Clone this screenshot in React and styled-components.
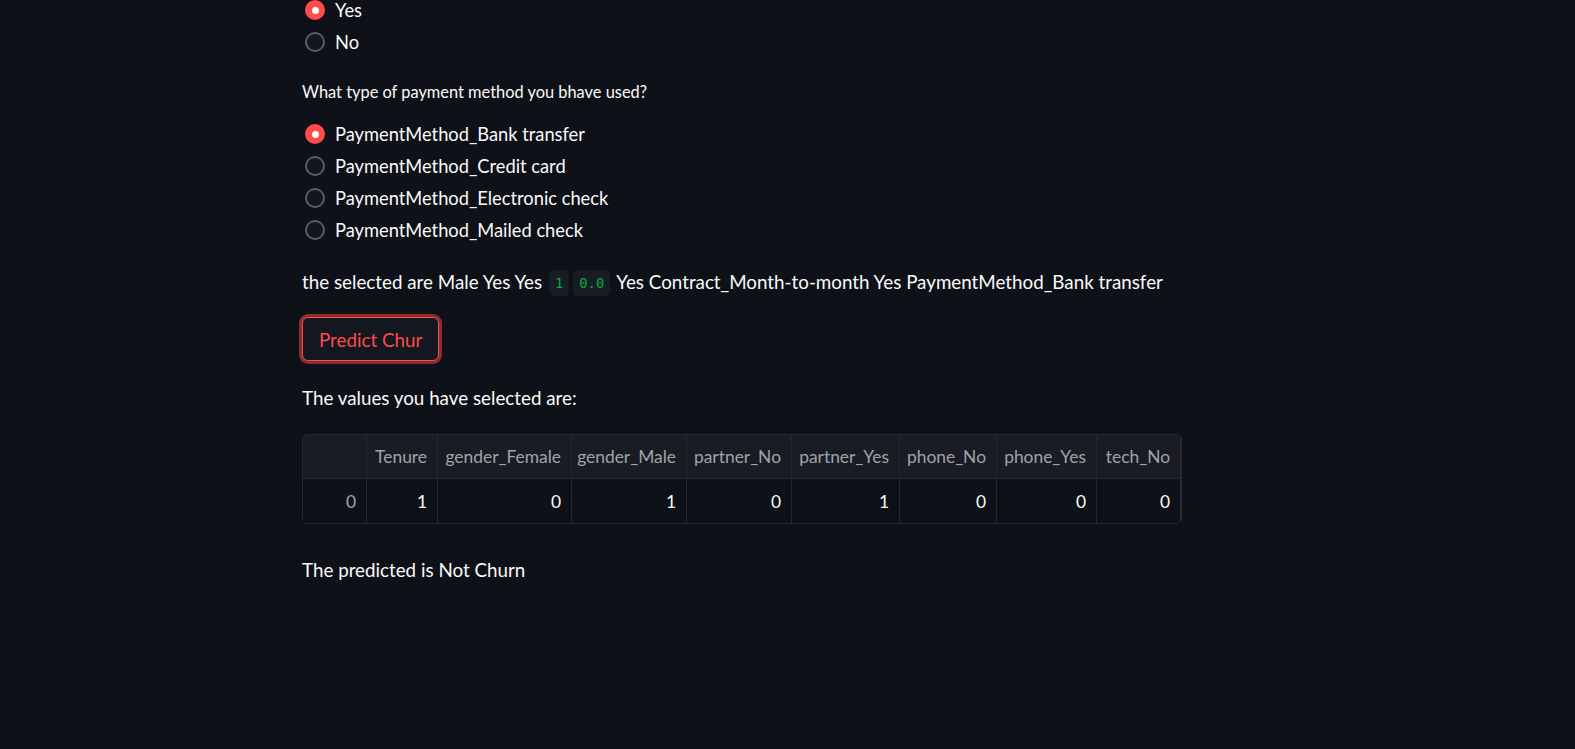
import styled, { createGlobalStyle } from "styled-components";

const GlobalStyle = createGlobalStyle`
  html, body {
    margin: 0;
    background: #0e1117;
    color: #fafafa;
    font-family: "Lato", "Noto Sans", sans-serif;
    overflow: hidden;
  }
`;

const Main = styled.main`
  display: flex;
  flex-direction: column;
  align-items: flex-start;
  padding-left: 302px;
  margin-top: -6px;
  height: 755px;
`;

const RadioGroup = styled.div`
  display: flex;
  flex-direction: column;
  margin-top: ${(p) => p.$top || 0}px;
`;

const RadioRow = styled.label`
  display: flex;
  align-items: center;
  gap: 10px;
  height: 32px;
  padding-left: 3px;
  font-size: 18.3px;
  color: #fafafa;
`;

const Dot = styled.span`
  box-sizing: border-box;
  width: 20px;
  height: 20px;
  border-radius: 50%;
  display: flex;
  align-items: center;
  justify-content: center;
  border: 2px solid ${(p) => (p.$on ? "#ff4b4b" : "#5b5d63")};
  background: ${(p) => (p.$on ? "#ff4b4b" : "#13161d")};

  &::after {
    content: "";
    display: ${(p) => (p.$on ? "block" : "none")};
    width: 7px;
    height: 7px;
    border-radius: 50%;
    background: #ffffff;
  }
`;

const Label = styled.div`
  margin-top: 24px;
  line-height: 20px;
  font-size: 16.4px;
  color: #fafafa;
`;

const Text = styled.p`
  margin: ${(p) => p.$top}px 0 0;
  line-height: 24px;
  font-size: 18.8px;
  color: #fafafa;
  white-space: nowrap;
`;

const Code = styled.code`
  font-family: "DejaVu Sans Mono", "Liberation Mono", monospace;
  font-size: 13.8px;
  color: #09ab3b;
  background: #1a1c24;
  border-radius: 5px;
  padding: 5px 6px;
  margin: 0 2px;
  vertical-align: 1px;
`;

const Button = styled.button`
  margin-top: 22px;
  height: 44px;
  padding: 0 16px;
  font-family: inherit;
  font-size: 18.8px;
  color: #ff4b4b;
  background: #13171f;
  border: 1px solid #ff4b4b;
  border-radius: 6px;
  box-shadow: 0 0 0 3px rgba(255, 75, 75, 0.5);
  cursor: pointer;
`;

const Table = styled.div`
  margin-top: 24px;
  display: grid;
  grid-template-columns: ${(p) => p.$cols};
  border: 1px solid #26282e;
  border-radius: 5px;
  overflow: hidden;
`;

const Cell = styled.div`
  height: 44px;
  display: flex;
  align-items: center;
  justify-content: flex-end;
  padding: 0 10px;
  font-size: 17.4px;
  box-sizing: border-box;
  background: ${(p) => (p.$head ? "#1a1c23" : "#0e1117")};
  color: ${(p) => (p.$muted ? "#a0a3ab" : "#fafafa")};
  border-right: 1px solid #26282e;
  border-bottom: ${(p) => (p.$head ? "1px solid #26282e" : "none")};
  white-space: nowrap;
`;

const columns = [
  { name: "", w: 64, v: "0" },
  { name: "Tenure", w: 71, v: "1" },
  { name: "gender_Female", w: 134, v: "0" },
  { name: "gender_Male", w: 115, v: "1" },
  { name: "partner_No", w: 105, v: "0" },
  { name: "partner_Yes", w: 108, v: "1" },
  { name: "phone_No", w: 97, v: "0" },
  { name: "phone_Yes", w: 100, v: "0" },
  { name: "tech_No", w: 84, v: "0" },
];

const payments = [
  "PaymentMethod_Bank transfer",
  "PaymentMethod_Credit card",
  "PaymentMethod_Electronic check",
  "PaymentMethod_Mailed check",
];

const App = () => {
  return (
    <>
      <GlobalStyle />
      <Main>
        <RadioGroup>
          <RadioRow><Dot $on />Yes</RadioRow>
          <RadioRow><Dot />No</RadioRow>
        </RadioGroup>

        <Label>What type of payment method you bhave used?</Label>

        <RadioGroup $top={16}>
          {payments.map((p, i) => (
            <RadioRow key={p}><Dot $on={i === 0} />{p}</RadioRow>
          ))}
        </RadioGroup>

        <Text $top={24}>
          the selected are Male Yes Yes <Code>1</Code><Code>0.0</Code> Yes Contract_Month-to-month Yes PaymentMethod_Bank transfer
        </Text>

        <Button>Predict Chur</Button>

        <Text $top={25}>The values you have selected are:</Text>

        <Table $cols={columns.map((c) => c.w + "px").join(" ")}>
          {columns.map((c) => (
            <Cell key={"h" + c.name} $head $muted>{c.name}</Cell>
          ))}
          {columns.map((c, i) => (
            <Cell key={"v" + c.name} $muted={i === 0}>{c.v}</Cell>
          ))}
        </Table>

        <Text $top={34}>The predicted is Not Churn</Text>
      </Main>
    </>
  );
};

export default App;
